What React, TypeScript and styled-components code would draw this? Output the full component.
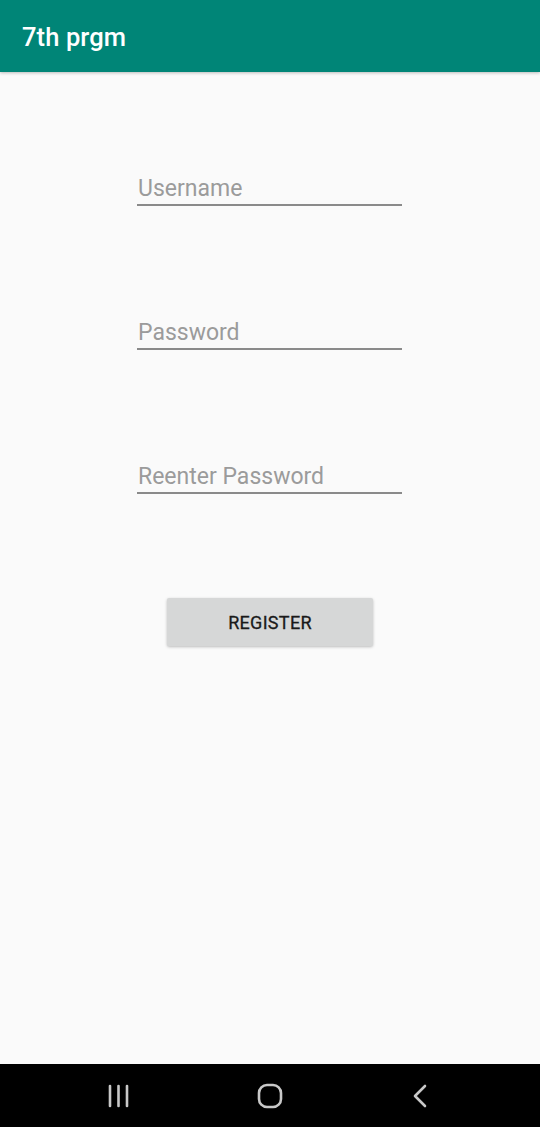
import React from "react";
import styled, { createGlobalStyle } from "styled-components";

const Global = createGlobalStyle`
  html, body { margin: 0; padding: 0; background: #fafafa; }
  body { font-family: Roboto, "Noto Sans", sans-serif; }
  * { box-sizing: border-box; }
`;

const Screen = styled.div`
  width: 540px;
  height: 1127px;
  display: flex;
  flex-direction: column;
  background: #fafafa;
  overflow: hidden;
`;

const AppBar = styled.header`
  height: 72px;
  flex: none;
  display: flex;
  align-items: center;
  padding: 0 22px;
  background: #008577;
  box-shadow: 0 1px 3px rgba(0, 0, 0, 0.25);
  position: relative;
  z-index: 1;
`;

const Title = styled.h1`
  margin: 0;
  padding-top: 1px;
  font-family: Roboto, sans-serif;
  font-weight: 500;
  font-size: 25.5px;
  color: #ffffff;
  letter-spacing: 0.1px;
`;

const Content = styled.main`
  flex: 1;
  display: flex;
  flex-direction: column;
  align-items: center;
  padding-top: 105px;
`;

const Field = styled.div<{ $gap: number }>`
  width: 265px;
  margin-left: -1px;
  margin-bottom: ${(p) => p.$gap}px;
  padding-bottom: 3px;
  border-bottom: 2px solid #8a8a8a;
`;

const Placeholder = styled.div`
  padding-left: 1px;
  font-family: Roboto, sans-serif;
  font-size: 23px;
  line-height: 24px;
  color: #9b9b9b;
`;

const Button = styled.button`
  width: 206px;
  height: 48px;
  margin-top: 1px;
  border: none;
  border-radius: 2px;
  background: #d6d7d7;
  box-shadow: 0 1px 3px rgba(0, 0, 0, 0.25);
  font-family: Roboto, sans-serif;
  font-weight: 400;
  font-size: 18px;
  color: #1a1a1a;
  letter-spacing: 0.3px;
  padding: 0;
  -webkit-text-stroke: 0.3px #1a1a1a;
`;

const NavBar = styled.nav`
  height: 63px;
  flex: none;
  background: #000;
  display: grid;
  grid-template-columns: repeat(3, 1fr);
  align-items: center;
  justify-items: center;
  padding: 0 44px;
`;

const NavIcon = styled.svg`
  display: block;
`;

export default function App() {
  return (
    <Screen>
      <Global />
      <AppBar>
        <Title>7th prgm</Title>
      </AppBar>
      <Content>
        <Field $gap={115}>
          <Placeholder>Username</Placeholder>
        </Field>
        <Field $gap={115}>
          <Placeholder>Password</Placeholder>
        </Field>
        <Field $gap={103}>
          <Placeholder>Reenter Password</Placeholder>
        </Field>
        <Button>REGISTER</Button>
      </Content>
      <NavBar>
        <NavIcon width="24" height="24" viewBox="0 0 24 24">
          <g stroke="#c8c8c8" strokeWidth="2.6" strokeLinecap="round">
            <line x1="3" y1="2" x2="3" y2="22" />
            <line x1="11.5" y1="2" x2="11.5" y2="22" />
            <line x1="20" y1="2" x2="20" y2="22" />
          </g>
        </NavIcon>
        <NavIcon width="26" height="26" viewBox="0 0 26 26">
          <rect x="2" y="2" width="22" height="22" rx="8" fill="none" stroke="#c8c8c8" strokeWidth="2.6" />
        </NavIcon>
        <NavIcon width="24" height="24" viewBox="0 0 24 24">
          <polyline points="16,2 6,12 16,22" fill="none" stroke="#c8c8c8" strokeWidth="2.6" strokeLinecap="round" strokeLinejoin="round" />
        </NavIcon>
      </NavBar>
    </Screen>
  );
}
